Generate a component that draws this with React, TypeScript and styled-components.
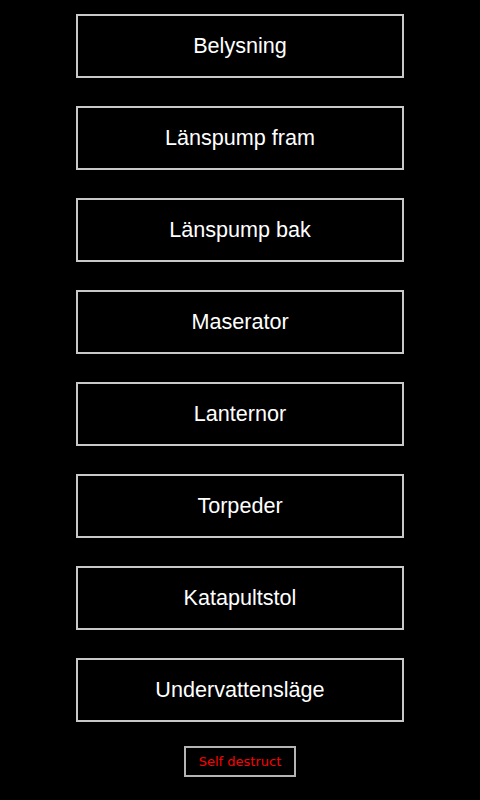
import React from "react";
import styled, { createGlobalStyle } from "styled-components";

const Global = createGlobalStyle`
  html, body { margin: 0; padding: 0; background: #000; }
  body { font-family: "Liberation Sans", Arial, sans-serif; }
`;

const Page = styled.div`
  display: flex;
  flex-direction: column;
  align-items: center;
  padding-top: 14px;
  gap: 28px;
  min-height: 800px;
  box-sizing: border-box;
  background: #000;
`;

const ControlButton = styled.button`
  width: 328px;
  height: 64px;
  box-sizing: border-box;
  background: #000;
  border: 2px solid #c8c8c8;
  color: #fff;
  font-family: "Liberation Sans", Arial, sans-serif;
  font-size: 21.6px;
  padding: 0 0 1px;
  display: flex;
  align-items: center;
  justify-content: center;
`;

const DestructButton = styled.button`
  margin-top: -4px;
  width: 112px;
  height: 31px;
  box-sizing: border-box;
  background: #000;
  border: 2px solid #b4b4b4;
  color: #ff0000;
  font-family: "DejaVu Sans", sans-serif;
  font-size: 13px;
  padding: 0;
  display: flex;
  align-items: center;
  justify-content: center;
`;

const items = [
  "Belysning",
  "Länspump fram",
  "Länspump bak",
  "Maserator",
  "Lanternor",
  "Torpeder",
  "Katapultstol",
  "Undervattensläge",
];

export default function App() {
  return (
    <>
      <Global />
      <Page>
        {items.map((t) => (
          <ControlButton key={t}>{t}</ControlButton>
        ))}
        <DestructButton>Self destruct</DestructButton>
      </Page>
    </>
  );
}
